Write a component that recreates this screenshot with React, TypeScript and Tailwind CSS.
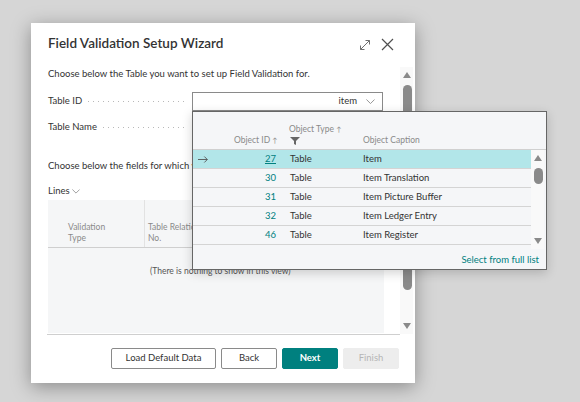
import React from "react";

const font = "font-['Lato',sans-serif]";

function ExpandIcon() {
  return (
    <svg width="12" height="12" viewBox="0 0 12 12" fill="none" stroke="#707070" strokeWidth="1">
      <path d="M1.5 10.5 L10.5 1.5 M6.5 1.5 H10.5 V5.5 M1.5 6.5 V10.5 H5.5" />
    </svg>
  );
}

function CloseIcon() {
  return (
    <svg width="13" height="13" viewBox="0 0 13 13" fill="none" stroke="#505050" strokeWidth="1.2">
      <path d="M1 1 L12 12 M12 1 L1 12" />
    </svg>
  );
}

function Chevron({ color = "#8a8a8a", size = 9 }: { color?: string; size?: number }) {
  return (
    <svg width={size} height={size / 2 + 1} viewBox="0 0 10 6" fill="none" stroke={color} strokeWidth="1">
      <path d="M0.5 0.5 L5 5 L9.5 0.5" />
    </svg>
  );
}

function Leader() {
  return (
    <div className="flex-1 h-[3px] mx-[4px] bg-[radial-gradient(circle,#b8b8b8_0.7px,transparent_1px)] bg-[length:5px_3px] bg-repeat-x" />
  );
}

function ScrollBar({ h, thumbTop, thumbH }: { h: number; thumbTop: number; thumbH: number }) {
  return (
    <div className="relative w-[13px] bg-[#f9f9f9] shrink-0" style={{ height: h }}>
      <div className="absolute left-[3px] top-[5px] w-0 h-0 border-l-[4px] border-r-[4px] border-b-[6px] border-l-transparent border-r-transparent border-b-[#8a8a8a]" />
      <div className="absolute left-[3px] w-[9px] rounded-full bg-[#8a8a8a]" style={{ top: thumbTop, height: thumbH }} />
      <div className="absolute left-[3px] bottom-[5px] w-0 h-0 border-l-[4px] border-r-[4px] border-t-[6px] border-l-transparent border-r-transparent border-t-[#8a8a8a]" />
    </div>
  );
}

const rows = [
  { id: "27", type: "Table", caption: "Item", selected: true },
  { id: "30", type: "Table", caption: "Item Translation" },
  { id: "31", type: "Table", caption: "Item Picture Buffer" },
  { id: "32", type: "Table", caption: "Item Ledger Entry" },
  { id: "46", type: "Table", caption: "Item Register" },
];

function Lookup() {
  return (
    <div className="absolute left-[192px] top-[111px] w-[355px] h-[159px] border border-[#666] bg-[#f5f6f8] shadow-[0_3px_10px_rgba(0,0,0,0.18)] flex flex-col">
      {/* header */}
      <div className="h-[37px] relative text-[8.5px] text-[#8a8a8a] leading-[12px]">
        <div className="absolute left-[41px] top-[22px]">Object ID <span className="text-[7px]">↑</span></div>
        <div className="absolute left-[96px] top-[11px]">Object Type <span className="text-[7px]">↑</span></div>
        <svg className="absolute left-[97px] top-[25px]" width="10" height="8" viewBox="0 0 10 8">
          <path d="M0 0 H10 L6 4 V8 L4 7 V4 Z" fill="#666" />
        </svg>
        <div className="absolute left-[170px] top-[22px]">Object Caption</div>
      </div>
      <div className="flex border-t border-[#d0d0d0]">
        <div className="w-[338px]">
          {rows.map((r) => (
            <div
              key={r.id}
              className={`h-[19px] flex items-center text-[9.5px] text-[#333] border-b border-[#d4d4d4] ${r.selected ? "bg-[#b2e6e9]" : ""}`}
            >
              <div className="w-[20px] pl-[5px] flex items-center">
                {r.selected && (
                  <svg width="10" height="7" viewBox="0 0 10 7" fill="none" stroke="#555" strokeWidth="0.9">
                    <path d="M0 3.5 H9.3 M6.3 0.5 L9.3 3.5 L6.3 6.5" />
                  </svg>
                )}
              </div>
              <div className={`w-[63px] text-right text-[#00807f] ${r.selected ? "underline" : ""}`}>{r.id}</div>
              <div className="w-[87px] pl-[14px]">{r.type}</div>
              <div>{r.caption}</div>
            </div>
          ))}
        </div>
        <ScrollBar h={99} thumbTop={18} thumbH={16} />
      </div>
      <div className="flex-1 flex items-center justify-end pr-[7px] pt-[3px] text-[9.5px] text-[#00807f]">
        Select from full list
      </div>
    </div>
  );
}

function Button({ children, variant = "default", w }: { children: React.ReactNode; variant?: string; w: number }) {
  const cls =
    variant === "primary"
      ? "bg-[#00807f] text-white font-bold border-[#00807f]"
      : variant === "disabled"
      ? "bg-[#ededed] text-[#b5b5b5] border-[#ededed]"
      : "bg-white text-[#333] border-[#8a8a8a]";
  return (
    <div className={`h-[21px] flex items-center justify-center border text-[9.5px] rounded-[2px] ${cls}`} style={{ width: w }}>
      {children}
    </div>
  );
}

export default function App() {
  return (
    <div className={`w-[580px] h-[402px] bg-[#d6d6d6] relative overflow-hidden ${font}`}>
      <div className="pt-[23px] pl-[31px]">
        <div className="w-[384px] h-[360px] bg-white shadow-[0_4px_18px_rgba(0,0,0,0.35)] flex flex-col">
          {/* title */}
          <div className="h-[44px] flex items-start pt-[10px] pl-[17px] pr-[21px]">
            <div className="flex-1 text-[13.5px] leading-[20px] font-semibold text-[#333]">Field Validation Setup Wizard</div>
            <div className="flex items-center gap-[10px] pt-[5px]">
              <ExpandIcon />
              <CloseIcon />
            </div>
          </div>
          {/* body */}
          <div className="flex h-[267px]">
            <div className="w-[352px] pl-[17px] text-[9.5px] text-[#333]">
              <div className="leading-[14px] h-[14px]">Choose below the Table you want to set up Field Validation for.</div>
              <div className="mt-[11px] flex items-center h-[19px]">
                <span>Table ID</span>
                <Leader />
                <div className="w-[191px] h-[19px] border border-[#8a8a8a] flex items-center justify-end pr-[7px] gap-[9px]">
                  <span>item</span>
                  <Chevron />
                </div>
              </div>
              <div className="mt-[7px] flex items-center h-[19px]">
                <span>Table Name</span>
                <Leader />
                <div className="w-[191px]" />
              </div>
              {/* covered by the lookup from x=192 */}
              <div className="mt-[22px] leading-[14px] h-[14px] w-[144px] overflow-hidden whitespace-nowrap">
                Choose below the fields for which you want to set up validation.
              </div>
              <div className="mt-[11px] leading-[14px] h-[14px] flex items-center gap-[2px]">
                <span>Lines</span>
                <Chevron size={8} />
              </div>
              <div className="mt-[2px] h-[133px] bg-[#f5f6f7] w-[336px] flex flex-col">
                <div className="h-[48px] flex border-b border-[#cfcfcf] text-[8.5px] text-[#8a8a8a] leading-[11px]">
                  <div className="w-[97px] border-r border-[#e2e2e2] pl-[20px] pt-[22px]">Validation<br />Type</div>
                  <div className="pl-[3px] pt-[22px] w-[47px] overflow-hidden whitespace-nowrap">Table Relation<br />No.</div>
                </div>
                <div className="pt-[17px] pl-[102px] text-[8.5px] text-[#555]">(There is nothing to show in this view)</div>
              </div>
            </div>
            <div className="ml-[17px] pt-0">
              <ScrollBar h={267} thumbTop={18} thumbH={205} />
            </div>
          </div>
          <div className="ml-[16px] w-[353px] h-px bg-[#cfcfcf]" />
          {/* footer */}
          <div className="flex justify-end gap-[5px] pt-[13px] pr-[16px]">
            <Button w={105}>Load Default Data</Button>
            <Button w={56}>Back</Button>
            <Button w={56} variant="primary">Next</Button>
            <Button w={56} variant="disabled">Finish</Button>
          </div>
        </div>
      </div>
      <Lookup />
    </div>
  );
}
